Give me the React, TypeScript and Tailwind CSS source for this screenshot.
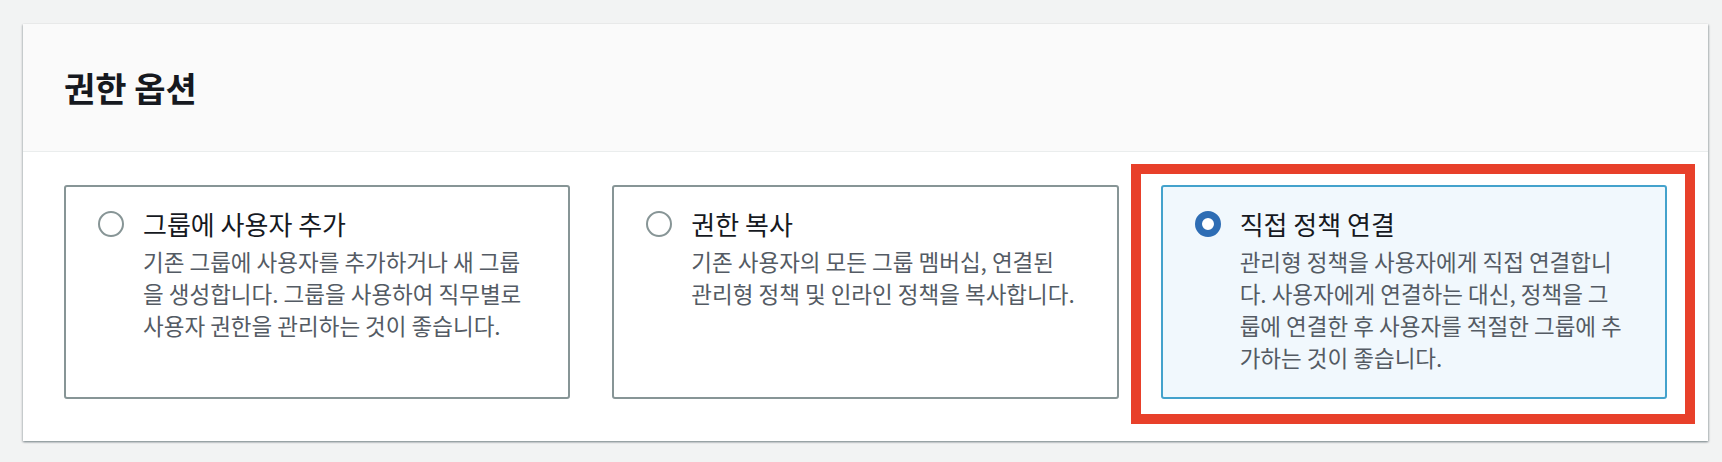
import React from "react"

type Option = {
  title: string
  lines: string[]
  selected?: boolean
  highlighted?: boolean
}

const options: Option[] = [
  {
    title: "그룹에 사용자 추가",
    lines: [
      "기존 그룹에 사용자를 추가하거나 새 그룹",
      "을 생성합니다. 그룹을 사용하여 직무별로",
      "사용자 권한을 관리하는 것이 좋습니다.",
    ],
  },
  {
    title: "권한 복사",
    lines: [
      "기존 사용자의 모든 그룹 멤버십, 연결된",
      "관리형 정책 및 인라인 정책을 복사합니다.",
    ],
  },
  {
    title: "직접 정책 연결",
    lines: [
      "관리형 정책을 사용자에게 직접 연결합니",
      "다. 사용자에게 연결하는 대신, 정책을 그",
      "룹에 연결한 후 사용자를 적절한 그룹에 추",
      "가하는 것이 좋습니다.",
    ],
    selected: true,
    highlighted: true,
  },
]

const Radio = ({ checked }: { checked?: boolean }) =>
  checked ? (
    <span className="block w-[26px] h-[26px] rounded-full border-[7px] border-[#2e6db4] bg-white" />
  ) : (
    <span className="block w-[26px] h-[26px] rounded-full border-2 border-[#879596] bg-white" />
  )

const Tile = ({ option }: { option: Option }) => (
  <div
    className={
      option.selected
        ? "h-[214px] rounded-[3px] border-2 border-[#44a2cc] bg-[#f1f8fd] pl-[32px] pt-[21px]"
        : "h-[214px] rounded-[3px] border-2 border-[#879596] bg-white pl-[32px] pt-[21px]"
    }
  >
    <div className="flex items-start gap-[19px]">
      <div className="h-[32px] flex items-center">
        <Radio checked={option.selected} />
      </div>
      <div className="flex flex-col">
        <span className="text-[26px] leading-[32px] text-[#16191f] whitespace-nowrap">
          {option.title}
        </span>
        <div className="mt-[5px] text-[22.5px] leading-[32px] text-[#545b64]">
          {option.lines.map((line, i) => (
            <span key={i} className="block whitespace-nowrap">
              {line}
            </span>
          ))}
        </div>
      </div>
    </div>
  </div>
)

export default function App() {
  return (
    <div
      className="min-h-screen w-full bg-[#f2f3f3] pt-[24px] pl-[23px]"
      style={{ fontFamily: '"Noto Sans CJK KR", "Noto Sans", sans-serif' }}
    >
      <div className="w-[1685px] bg-white shadow-[0_1px_2px_rgba(0,28,36,0.3),1px_1px_2px_rgba(0,28,36,0.2),-1px_1px_2px_rgba(0,28,36,0.12)]">
        {/* header */}
        <div className="h-[128px] flex items-center px-[41px] bg-[#fafafa] border-b border-[#eaeded]">
          <h2 className="text-[34px] font-bold text-[#16191f] leading-none">권한 옵션</h2>
        </div>

        {/* options */}
        <div className="grid grid-cols-3 gap-[42px] px-[41px] pt-[33px] pb-[42px]">
          {options.map((option, i) => (
            <div key={i} className="relative">
              {option.highlighted && (
                <span className="absolute -left-[30px] -right-[28px] -top-[21px] -bottom-[25px] border-[10px] border-[#e8402a] pointer-events-none" />
              )}
              <Tile option={option} />
            </div>
          ))}
        </div>
      </div>
    </div>
  )
}
